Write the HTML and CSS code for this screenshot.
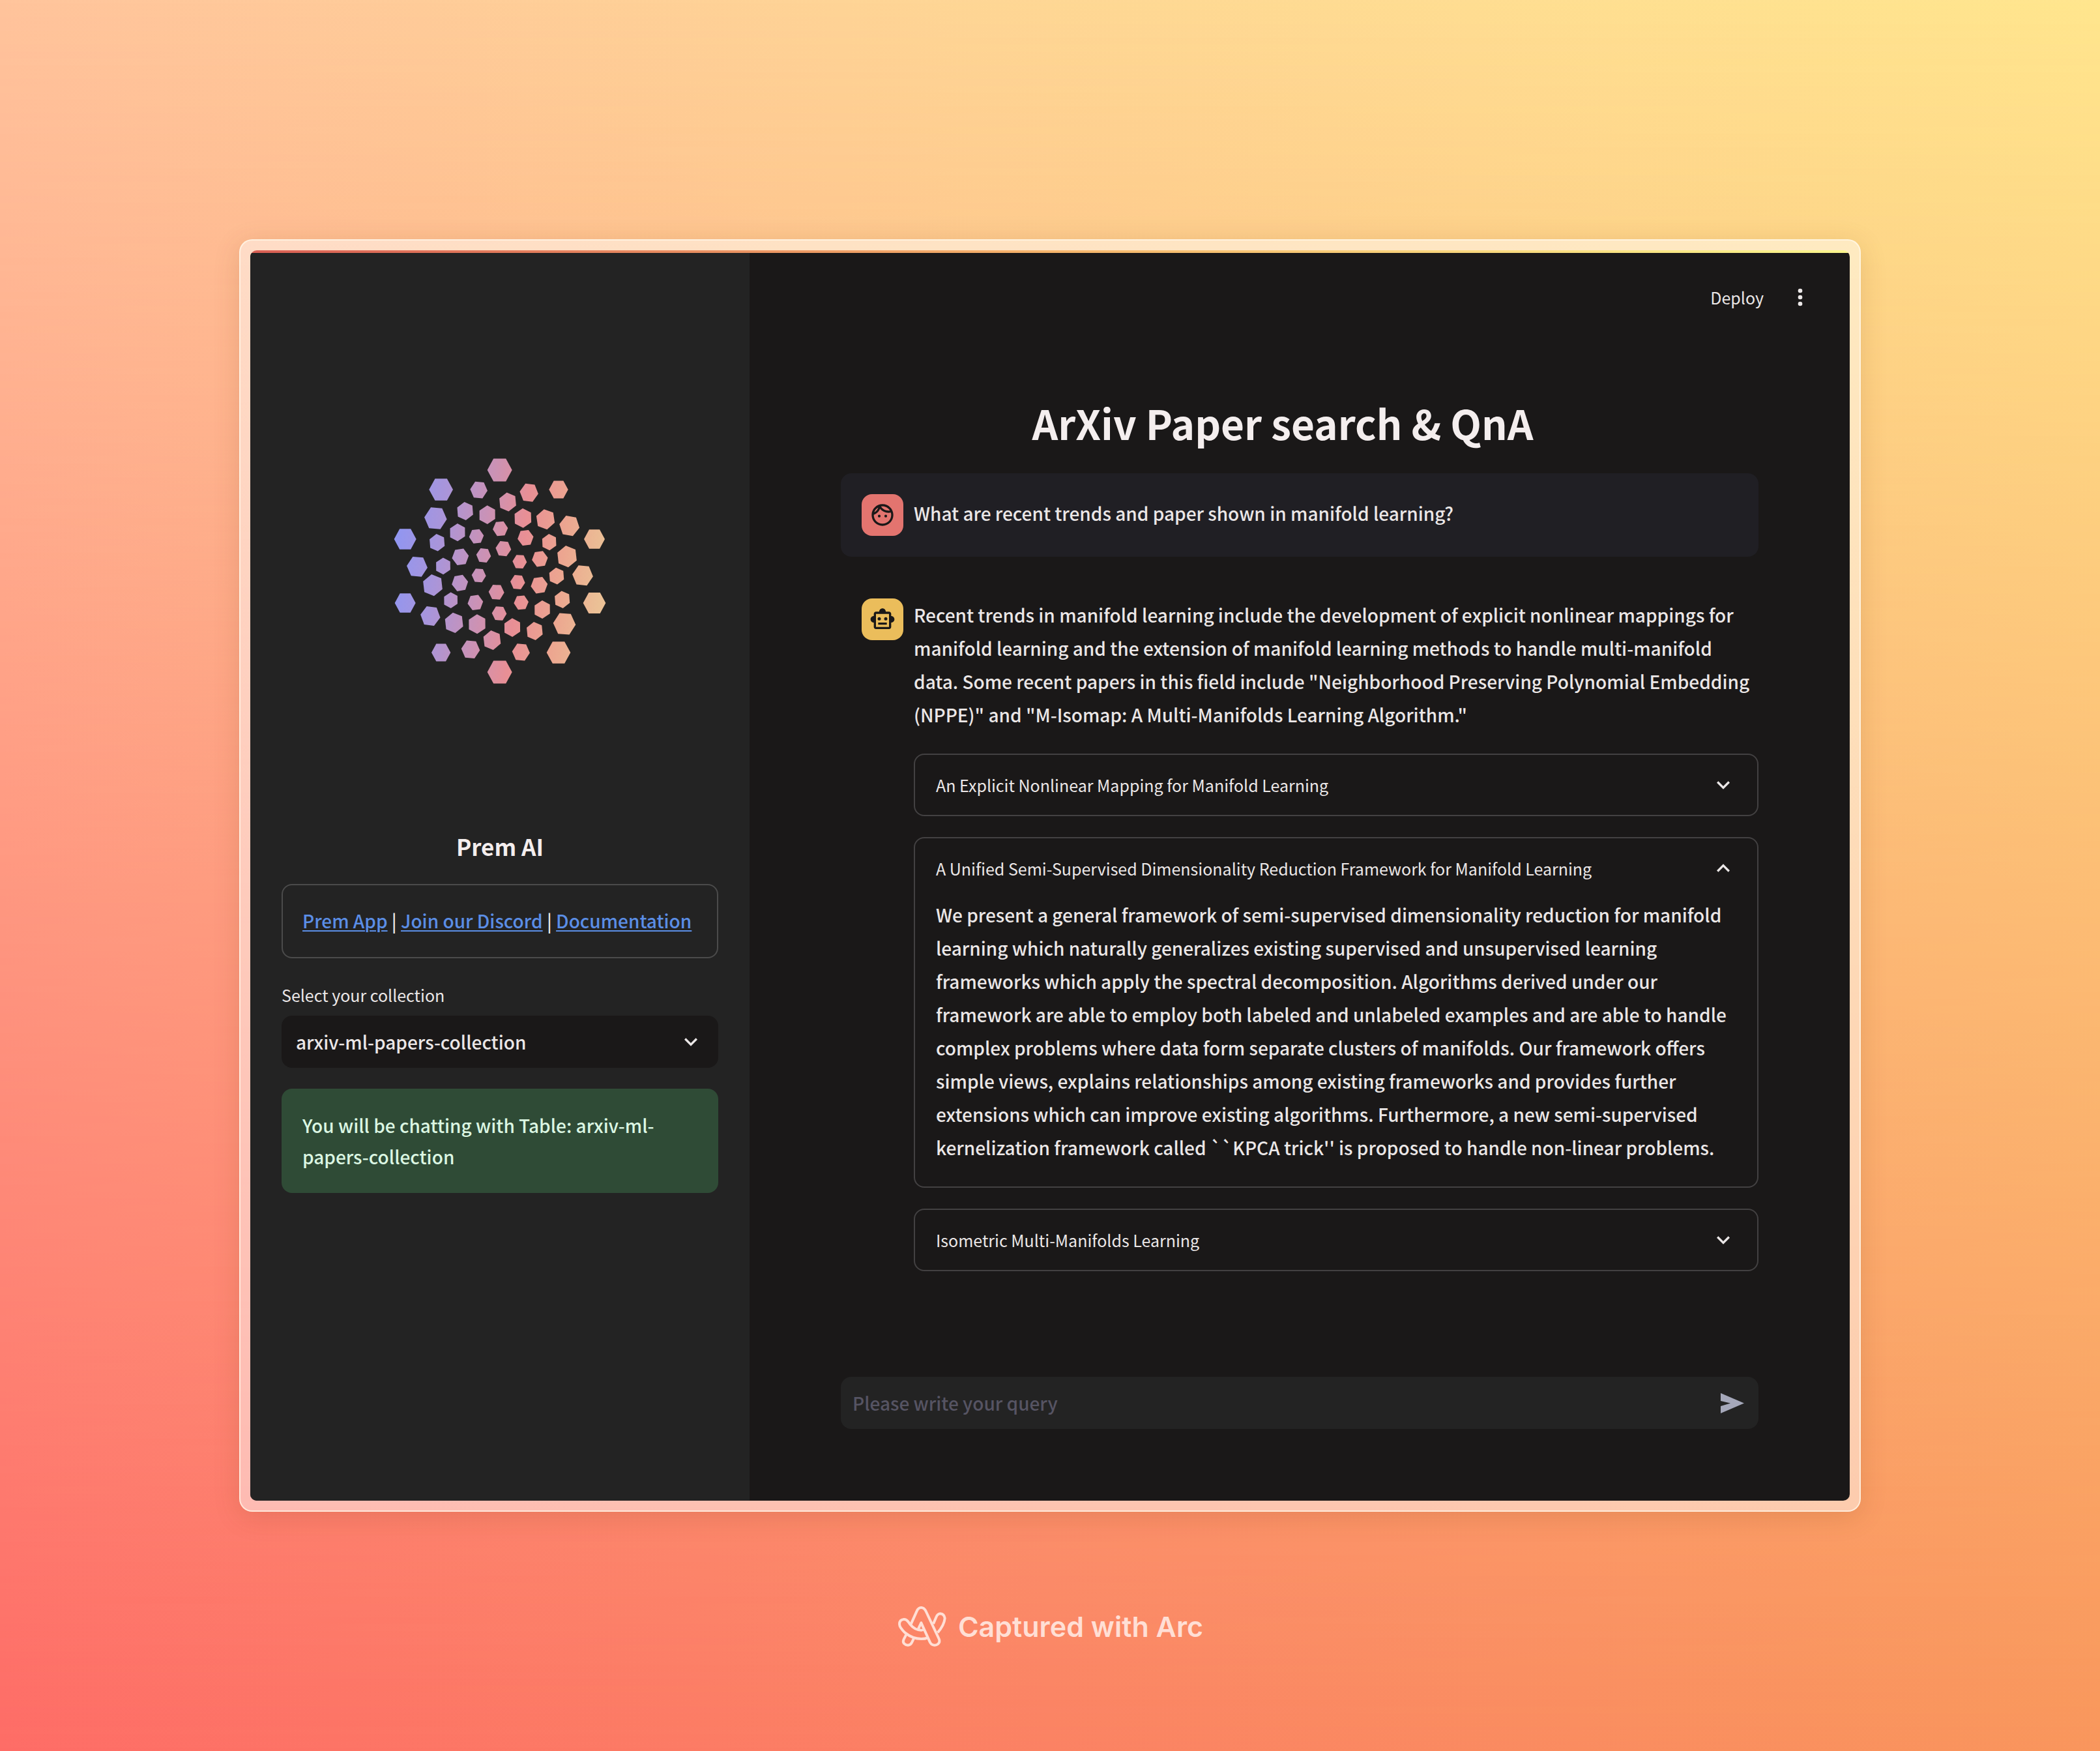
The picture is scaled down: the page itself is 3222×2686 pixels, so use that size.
FILE: index.html
```html
<!DOCTYPE html>
<html lang="en">
<head>
<meta charset="utf-8">
<meta name="viewport" content="width=device-width, initial-scale=1">
<title>ArXiv Paper search &amp; QnA</title>
<link rel="stylesheet" href="styles.css">
</head>
<body>
<div class="frame">
  <div class="app">
    <aside class="sidebar">
      <svg class="brand-mark" viewBox="-9 0 1140 1170" role="img" aria-label="Prem AI logo">
        <defs>
          <linearGradient id="spectrum" gradientUnits="userSpaceOnUse" x1="80" y1="525" x2="1030" y2="645">
            <stop offset="0" stop-color="#9296f0"/>
            <stop offset=".2" stop-color="#a995da"/>
            <stop offset=".42" stop-color="#cb92b5"/>
            <stop offset=".6" stop-color="#e88f95"/>
            <stop offset=".8" stop-color="#eca690"/>
            <stop offset="1" stop-color="#ebc196"/>
          </linearGradient>
          <polygon id="hex" points="1,0 .5,.92 -.5,.92 -1,0 -.5,-.92 .5,-.92"/>
          <mask id="dots" maskUnits="userSpaceOnUse" x="0" y="0" width="1140" height="1170">
            <g fill="#fff">
              <use href="#hex" transform="translate(560 123) scale(57)"/>
              <use href="#hex" transform="translate(290 213) scale(55)"/>
              <use href="#hex" transform="translate(464 215) rotate(5) scale(40)"/>
              <use href="#hex" transform="translate(695 227) rotate(7) scale(43)"/>
              <use href="#hex" transform="translate(831 213) scale(44)"/>
              <use href="#hex" transform="translate(597 270) rotate(23) scale(42)"/>
              <use href="#hex" transform="translate(401 312) rotate(24) scale(40)"/>
              <use href="#hex" transform="translate(503 329) rotate(28) scale(41)"/>
              <use href="#hex" transform="translate(667 344) rotate(27) scale(43)"/>
              <use href="#hex" transform="translate(771 350) rotate(20) scale(45)"/>
              <use href="#hex" transform="translate(881 380) rotate(10) scale(47)"/>
              <use href="#hex" transform="translate(265 345) rotate(5) scale(52)"/>
              <use href="#hex" transform="translate(125 441) scale(51)"/>
              <use href="#hex" transform="translate(996 441) scale(48)"/>
              <use href="#hex" transform="translate(366 410) rotate(28) scale(39)"/>
              <use href="#hex" transform="translate(272 457) rotate(24) scale(38)"/>
              <use href="#hex" transform="translate(453 428) rotate(-6) scale(34)"/>
              <use href="#hex" transform="translate(563 393) rotate(-5) scale(35)"/>
              <use href="#hex" transform="translate(679 435) rotate(-8) scale(37)"/>
              <use href="#hex" transform="translate(788 455) rotate(26) scale(36)"/>
              <use href="#hex" transform="translate(870 521) rotate(22) scale(48)"/>
              <use href="#hex" transform="translate(942 608) rotate(6) scale(48)"/>
              <use href="#hex" transform="translate(180 568) rotate(5) scale(48)"/>
              <use href="#hex" transform="translate(300 565) rotate(28) scale(37)"/>
              <use href="#hex" transform="translate(379 523) rotate(-8) scale(39)"/>
              <use href="#hex" transform="translate(486 516) rotate(6) scale(34)"/>
              <use href="#hex" transform="translate(577 485) rotate(6) scale(36)"/>
              <use href="#hex" transform="translate(652 545) rotate(3) scale(33)"/>
              <use href="#hex" transform="translate(745 532) rotate(-8) scale(37)"/>
              <use href="#hex" transform="translate(822 611) rotate(24) scale(37)"/>
              <use href="#hex" transform="translate(464 608) rotate(4) scale(33)"/>
              <use href="#hex" transform="translate(377 643) rotate(-10) scale(38)"/>
              <use href="#hex" transform="translate(252 653) rotate(22) scale(48)"/>
              <use href="#hex" transform="translate(335 722) rotate(28) scale(35)"/>
              <use href="#hex" transform="translate(241 795) rotate(8) scale(46)"/>
              <use href="#hex" transform="translate(125 735) scale(48)"/>
              <use href="#hex" transform="translate(350 826) rotate(22) scale(45)"/>
              <use href="#hex" transform="translate(448 733) rotate(-8) scale(36)"/>
              <use href="#hex" transform="translate(456 832) rotate(28) scale(43)"/>
              <use href="#hex" transform="translate(545 685) rotate(3) scale(36)"/>
              <use href="#hex" transform="translate(558 783) rotate(3) scale(34)"/>
              <use href="#hex" transform="translate(525 906) rotate(22) scale(43)"/>
              <use href="#hex" transform="translate(426 949) rotate(5) scale(43)"/>
              <use href="#hex" transform="translate(290 963) scale(44)"/>
              <use href="#hex" transform="translate(560 1053) scale(57)"/>
              <use href="#hex" transform="translate(618 848) rotate(28) scale(41)"/>
              <use href="#hex" transform="translate(643 639) rotate(5) scale(34)"/>
              <use href="#hex" transform="translate(659 733) rotate(-5) scale(34)"/>
              <use href="#hex" transform="translate(742 653) rotate(-8) scale(39)"/>
              <use href="#hex" transform="translate(756 765) rotate(28) scale(40)"/>
              <use href="#hex" transform="translate(848 719) rotate(24) scale(38)"/>
              <use href="#hex" transform="translate(721 864) rotate(23) scale(40)"/>
              <use href="#hex" transform="translate(858 831) rotate(4) scale(52)"/>
              <use href="#hex" transform="translate(831 963) scale(55)"/>
              <use href="#hex" transform="translate(996 735) scale(52)"/>
              <use href="#hex" transform="translate(658 961) rotate(5) scale(41)"/>
            </g>
          </mask>
        </defs>
        <rect width="1140" height="1170" fill="url(#spectrum)" mask="url(#dots)"/>
      </svg>
      <h2 class="brand-name">Prem AI</h2>
      <nav class="links"><a href="#app">Prem App</a> | <a href="#discord">Join our Discord</a> | <a href="#docs">Documentation</a></nav>
      <label class="field-label" for="collection">Select your collection</label>
      <div class="select-wrap">
        <select id="collection" class="select"><option>arxiv-ml-papers-collection</option></select>
        <svg class="icon select-arrow" viewBox="0 0 24 24" aria-hidden="true"><path d="M16.59 8.59 12 13.17 7.41 8.59 6 10l6 6 6-6z"/></svg>
      </div>
      <p class="notice">You will be chatting with Table: arxiv-ml-papers-collection</p>
    </aside>
    <main class="main">
      <header class="toolbar">
        <button class="deploy" type="button">Deploy</button>
        <button class="menu" type="button" aria-label="Menu"><svg class="icon" viewBox="0 0 24 24" aria-hidden="true"><circle cx="12" cy="6" r="2"/><circle cx="12" cy="12" r="2"/><circle cx="12" cy="18" r="2"/></svg></button>
      </header>
      <div class="content">
        <h1 class="title">ArXiv Paper search &amp; QnA</h1>
        <section class="message message-user">
          <span class="avatar avatar-user"><svg class="icon" viewBox="0 0 24 24" aria-hidden="true"><path d="M10.25 13a1.25 1.25 0 1 1-2.5 0 1.25 1.25 0 0 1 2.5 0zM15 11.75a1.25 1.25 0 1 0 0 2.5 1.25 1.25 0 0 0 0-2.5zm7 .25c0 5.52-4.48 10-10 10S2 17.52 2 12 6.48 2 12 2s10 4.48 10 10zM10.66 4.12C12.06 6.44 14.6 8 17.5 8c.46 0 .91-.05 1.34-.12C17.44 5.56 14.9 4 12 4c-.46 0-.91.05-1.34.12zM4.42 9.47a8.046 8.046 0 0 0 3.66-4.44 8.046 8.046 0 0 0-3.66 4.44zM20 12c0-.78-.12-1.53-.33-2.24-.7.15-1.42.24-2.17.24a10 10 0 0 1-7.76-3.69A10.016 10.016 0 0 1 4 11.86c.01.04 0 .09 0 .14 0 4.41 3.59 8 8 8s8-3.59 8-8z"/></svg></span>
          <p class="text">What are recent trends and paper shown in manifold learning?</p>
        </section>
        <section class="message">
          <span class="avatar avatar-bot"><svg class="icon" viewBox="0 0 24 24" aria-hidden="true"><path d="M20 9V7c0-1.1-.9-2-2-2h-3c0-1.66-1.34-3-3-3S9 3.34 9 5H6c-1.1 0-2 .9-2 2v2c-1.66 0-3 1.34-3 3s1.34 3 3 3v4c0 1.1.9 2 2 2h12c1.1 0 2-.9 2-2v-4c1.66 0 3-1.34 3-3s-1.34-3-3-3zm-2 10H6V7h12v12zM9 13a1.5 1.5 0 1 1 0-3 1.5 1.5 0 0 1 0 3zm7.5-1.5a1.5 1.5 0 1 1-3 0 1.5 1.5 0 0 1 3 0zM8 15h8v2H8v-2z"/></svg></span>
          <div class="answer">
            <p class="text">Recent trends in manifold learning include the development of explicit nonlinear mappings for manifold learning and the extension of manifold learning methods to handle multi-manifold data. Some recent papers in this field include "Neighborhood Preserving Polynomial Embedding (NPPE)" and "M-Isomap: A Multi-Manifolds Learning Algorithm."</p>
            <details class="paper">
              <summary>An Explicit Nonlinear Mapping for Manifold Learning<svg class="icon" viewBox="0 0 24 24" aria-hidden="true"><path d="M16.59 8.59 12 13.17 7.41 8.59 6 10l6 6 6-6z"/></svg></summary>
            </details>
            <details class="paper" open>
              <summary>A Unified Semi-Supervised Dimensionality Reduction Framework for Manifold Learning<svg class="icon" viewBox="0 0 24 24" aria-hidden="true"><path d="m12 8-6 6 1.41 1.41L12 10.83l4.59 4.58L18 14z"/></svg></summary>
              <p class="text">We present a general framework of semi-supervised dimensionality reduction for manifold learning which naturally generalizes existing supervised and unsupervised learning frameworks which apply the spectral decomposition. Algorithms derived under our framework are able to employ both labeled and unlabeled examples and are able to handle complex problems where data form separate clusters of manifolds. Our framework offers simple views, explains relationships among existing frameworks and provides further extensions which can improve existing algorithms. Furthermore, a new semi-supervised kernelization framework called ``KPCA trick'' is proposed to handle non-linear problems.</p>
            </details>
            <details class="paper">
              <summary>Isometric Multi-Manifolds Learning<svg class="icon" viewBox="0 0 24 24" aria-hidden="true"><path d="M16.59 8.59 12 13.17 7.41 8.59 6 10l6 6 6-6z"/></svg></summary>
            </details>
          </div>
        </section>
        <form class="query">
          <input class="query-input" type="text" placeholder="Please write your query" aria-label="Please write your query">
          <button class="send" type="button" aria-label="Send"><svg viewBox="0 0 36 31" aria-hidden="true"><path d="M0 0 36 15.5 0 31V20L15 15.5 0 12z"/></svg></button>
        </form>
      </div>
    </main>
  </div>
</div>
<footer class="credit">
  <svg class="arc-mark" viewBox="72 92 234 198" aria-hidden="true">
    <g fill="none" stroke="currentColor" stroke-width="12" stroke-linejoin="round">
      <path d="M137 180 164 120Q171 104 184 104Q197 104 205 119L266 248Q272 262 262 271Q255 277 246 277Q232 277 225 264L184 174 171 202"/>
      <path d="M214 243Q203 248 184 248Q145 248 110 220Q84 196 84 180Q84 160 104 158Q116 157 125 170L134 182Q155 208 184 208Q190 208 195 206"/>
      <path d="M115 229 104 250Q98 262 106 270Q113 277 123 277Q135 277 141 265L150 246"/>
      <path d="M240 179 253 148Q260 132 272 132Q290 134 293 153Q290 185 260 219"/>
    </g>
  </svg>
  <span>Captured with Arc</span>
</footer>
</body>
</html>
```

FILE: styles.css
```css
* { box-sizing: border-box; }

html { min-height: 100%; display: flex; }

body {
  flex: 1;
  margin: 0;
  padding: 367px 367px 0;
  position: relative;
  isolation: isolate;
  font-family: "Noto Sans CJK SC", "Noto Sans", sans-serif;
  font-size: 28px;
  font-weight: 500;
  line-height: 51px;
  color: #ebe7e7;
  background: linear-gradient(to right, #ffc49c, #fed496 40%, #ffe68e);
}

body::before {
  content: "";
  position: absolute;
  inset: 0;
  z-index: -1;
  background: linear-gradient(to right, #fe6c66, #fb8263 50%, #f9965c);
  -webkit-mask-image: linear-gradient(to bottom, transparent, #000);
  mask-image: linear-gradient(to bottom, transparent, #000);
}

h1, h2, p { margin: 0; }

button, select, input { font: inherit; color: inherit; border: 0; background: none; padding: 0; }

.icon { width: 40px; height: 40px; fill: currentColor; flex: none; display: block; }

.frame {
  padding: 15px;
  border: 2px solid rgba(255, 250, 235, .7);
  border-radius: 20px;
  background: rgba(255, 255, 255, .48);
  box-shadow: 0 8px 40px rgba(120, 60, 20, .16);
}

.app {
  display: grid;
  grid-template-columns: 766px 1fr;
  border-radius: 10px;
  overflow: hidden;
  background: linear-gradient(to right, #d95f54, #f6b46b 50%, #faf58c) top / 100% 4px no-repeat #1a1818;
}

.sidebar {
  margin-top: 4px;
  padding: 292px 48px 472px;
  background: #232323;
  display: flex;
  flex-direction: column;
}

.brand-mark { width: 380px; height: 390px; align-self: center; }

.brand-name {
  margin-top: 202px;
  font-size: 35px;
  line-height: 52px;
  font-weight: 700;
  text-align: center;
  color: #f4eeee;
}

.links {
  margin-top: 32px;
  padding: 29px 30px 30px;
  border: 2px solid #4b4b4b;
  border-radius: 16px;
  white-space: nowrap;
}

.links a { color: #5b8ee6; text-underline-offset: 3px; text-decoration-thickness: 2px; }

.field-label { margin-top: 32px; font-size: 25px; font-weight: 400; line-height: 48px; }

.select-wrap { position: relative; margin-top: 8px; }

.select {
  appearance: none;
  width: 100%;
  height: 80px;
  padding: 0 80px 0 22px;
  border-radius: 16px;
  background: #1a1818;
}

.select-arrow { position: absolute; right: 22px; top: 20px; pointer-events: none; }

.notice {
  margin-top: 32px;
  padding: 32px;
  border-radius: 16px;
  line-height: 48px;
  color: #dcf7e3;
  background: #2f4b36;
}

.main { margin-top: 4px; padding-bottom: 110px; }

.toolbar {
  height: 136px;
  padding-right: 56px;
  display: flex;
  align-items: center;
  justify-content: flex-end;
  gap: 36px;
}

.deploy { font-size: 25px; font-weight: 400; }

.content { max-width: 1408px; margin: 84px 140px 0; }

.title {
  padding-right: 52px;
  font-size: 62px;
  line-height: 80px;
  font-weight: 700;
  text-align: center;
  color: #f4eeee;
}

.message { display: flex; gap: 16px; padding: 32px; padding-right: 0; border-radius: 16px; }

.message-user { margin: 38px 0 32px; background: #201f24; }

.message-user .text { padding-top: 4px; }

.avatar {
  flex: none;
  width: 64px;
  height: 64px;
  border-radius: 16px;
  display: grid;
  place-items: center;
  color: #1a1818;
}

.avatar-user { background: #e3746f; }

.avatar-bot { background: #ebbd5b; }

.answer { flex: 1; display: flex; flex-direction: column; gap: 32px; }

.answer > .text { padding-bottom: 2px; }

.paper { border: 2px solid #434142; border-radius: 16px; padding: 0 32px; }

.paper summary {
  height: 92px;
  display: flex;
  align-items: center;
  justify-content: space-between;
  list-style: none;
  font-size: 25px;
  font-weight: 400;
}

.paper .text { padding-bottom: 34px; }

.query {
  margin-top: 130px;
  height: 80px;
  padding: 0 22px 0 18px;
  border-radius: 16px;
  display: flex;
  align-items: center;
  background: #232323;
}

.query-input { flex: 1; outline: none; }

.query-input::placeholder { color: #565463; opacity: 1; }

.send svg { display: block; width: 36px; height: 31px; fill: #a5a8ba; }

.credit {
  padding: 143px 0 158px;
  display: flex;
  align-items: center;
  justify-content: center;
  gap: 16px;
  font-family: Inter, sans-serif;
  font-size: 43px;
  font-weight: 600;
  color: #ffdfd5;
}

.arc-mark { width: 78px; height: 66px; }
```
